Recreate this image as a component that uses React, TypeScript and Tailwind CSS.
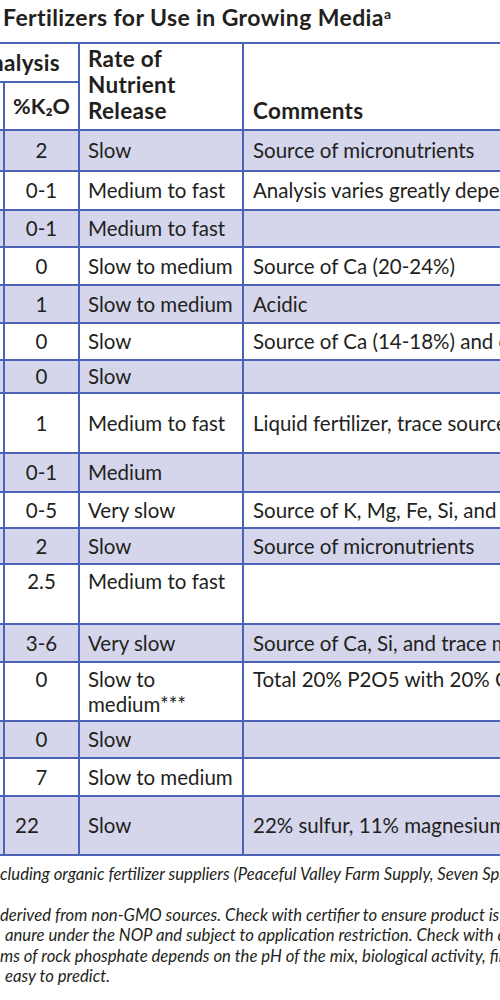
const rows = [
  { k: "2", rate: "Slow", note: "Source of micronutrients", h: "h-[41px]", shade: true, align: "items-center" },
  { k: "0-1", rate: "Medium to fast", note: "Analysis varies greatly depending on source", h: "h-[39px]", shade: false, align: "items-center" },
  { k: "0-1", rate: "Medium to fast", note: "", h: "h-[37px]", shade: true, align: "items-center" },
  { k: "0", rate: "Slow to medium", note: "Source of Ca (20-24%)", h: "h-[38px]", shade: false, align: "items-center" },
  { k: "1", rate: "Slow to medium", note: "Acidic", h: "h-[38px]", shade: true, align: "items-center" },
  { k: "0", rate: "Slow", note: "Source of Ca (14-18%) and chitin", h: "h-[37px]", shade: false, align: "items-center" },
  { k: "0", rate: "Slow", note: "", h: "h-[33px]", shade: true, align: "items-center" },
  { k: "1", rate: "Medium to fast", note: "Liquid fertilizer, trace source of micronutrients", h: "h-[60px]", shade: false, align: "items-center" },
  { k: "0-1", rate: "Medium", note: "", h: "h-[39px]", shade: true, align: "items-center" },
  { k: "0-5", rate: "Very slow", note: "Source of K, Mg, Fe, Si, and trace minerals", h: "h-[36px]", shade: false, align: "items-center" },
  { k: "2", rate: "Slow", note: "Source of micronutrients", h: "h-[36px]", shade: true, align: "items-center" },
  { k: "2.5", rate: "Medium to fast", note: "", h: "h-[60px]", shade: false, align: "items-start pt-[4px]" },
  { k: "3-6", rate: "Very slow", note: "Source of Ca, Si, and trace minerals", h: "h-[38px]", shade: true, align: "items-center" },
  { k: "0", rate: "Slow to medium***", note: "Total 20% P2O5 with 20% Ca", h: "h-[59px]", shade: false, align: "items-start pt-[4px]" },
  { k: "0", rate: "Slow", note: "", h: "h-[37px]", shade: true, align: "items-center" },
  { k: "7", rate: "Slow to medium", note: "", h: "h-[38px]", shade: false, align: "items-center" },
  { k: "22", rate: "Slow", note: "22% sulfur, 11% magnesium", h: "h-[59px]", shade: true, align: "items-center", left: true },
]

export default function App() {
  return (
    <div className="w-[500px] h-[1000px] overflow-hidden bg-white text-[#231f20] font-['Lato',sans-serif]">
      <div className="h-[42px] pt-[4px] pl-[3px] text-[23px] tracking-[0.4px] leading-[26px] font-bold whitespace-nowrap">
        Fertilizers for Use in Growing Media<sup className="text-[14px] font-bold">a</sup>
      </div>

      {/* header */}
      <div className="flex border-y-2 border-[#4a63b6] h-[89px] text-[22.5px] tracking-[0.3px] font-bold">
        <div className="w-[78px] flex flex-col">
          <div className="h-[39px] border-b-2 border-[#4a63b6] overflow-hidden flex items-center justify-end pr-[18px] whitespace-nowrap">
            Analysis
          </div>
          <div className="flex-1 flex">
            <div className="w-[3px]" />
            <div className="flex-1 border-l-2 border-[#4a63b6] flex items-end justify-center pb-[7px] tracking-normal text-[21.5px]">
              %K₂O
            </div>
          </div>
        </div>
        <div className="w-[164px] border-l-2 border-[#4a63b6] pl-[8px] pb-[5px] flex flex-col justify-end leading-[26px]">
          <div>Rate of</div>
          <div>Nutrient</div>
          <div>Release</div>
        </div>
        <div className="flex-1 border-l-2 border-[#4a63b6] pl-[9px] pb-[5px] flex items-end leading-[26px]">
          Comments
        </div>
      </div>

      {/* body */}
      {rows.map((r, i) => (
        <div
          key={i}
          className={`flex border-b-2 border-[#4a63b6] text-[20.5px] leading-[25px] whitespace-nowrap ${r.h} ${r.shade ? "bg-[#d5d6eb]" : "bg-white"}`}
        >
          <div className="w-[3px]" />
          <div className={`w-[75px] border-l-2 border-[#4a63b6] flex ${r.align} ${r.left ? "justify-start pl-[10px]" : "justify-center"}`}>
            {r.k}
          </div>
          <div className={`w-[164px] border-l-2 border-[#4a63b6] pl-[8px] flex ${r.align}`}>
            {r.rate === "Slow to medium***" ? (
              <div className="whitespace-normal">
                Slow to
                <br />
                medium***
              </div>
            ) : (
              r.rate
            )}
          </div>
          <div className={`flex-1 border-l-2 border-[#4a63b6] pl-[9px] overflow-hidden flex ${r.align}`}>
            {r.note}
          </div>
        </div>
      ))}

      {/* footnotes */}
      <div className="mt-[8px] text-[16.7px] italic leading-[20.5px] whitespace-nowrap">
        <div>cluding organic fertilizer suppliers (Peaceful Valley Farm Supply, Seven Springs Farm).</div>
        <div className="h-[20px]" />
        <div>derived from non-GMO sources. Check with certifier to ensure product is allowed.</div>
        <div className="pl-[5px]">anure under the NOP and subject to application restriction. Check with certifier.</div>
        <div>ms of rock phosphate depends on the pH of the mix, biological activity, fineness of grind,</div>
        <div className="pl-[5px]">easy to predict.</div>
      </div>
    </div>
  )
}
